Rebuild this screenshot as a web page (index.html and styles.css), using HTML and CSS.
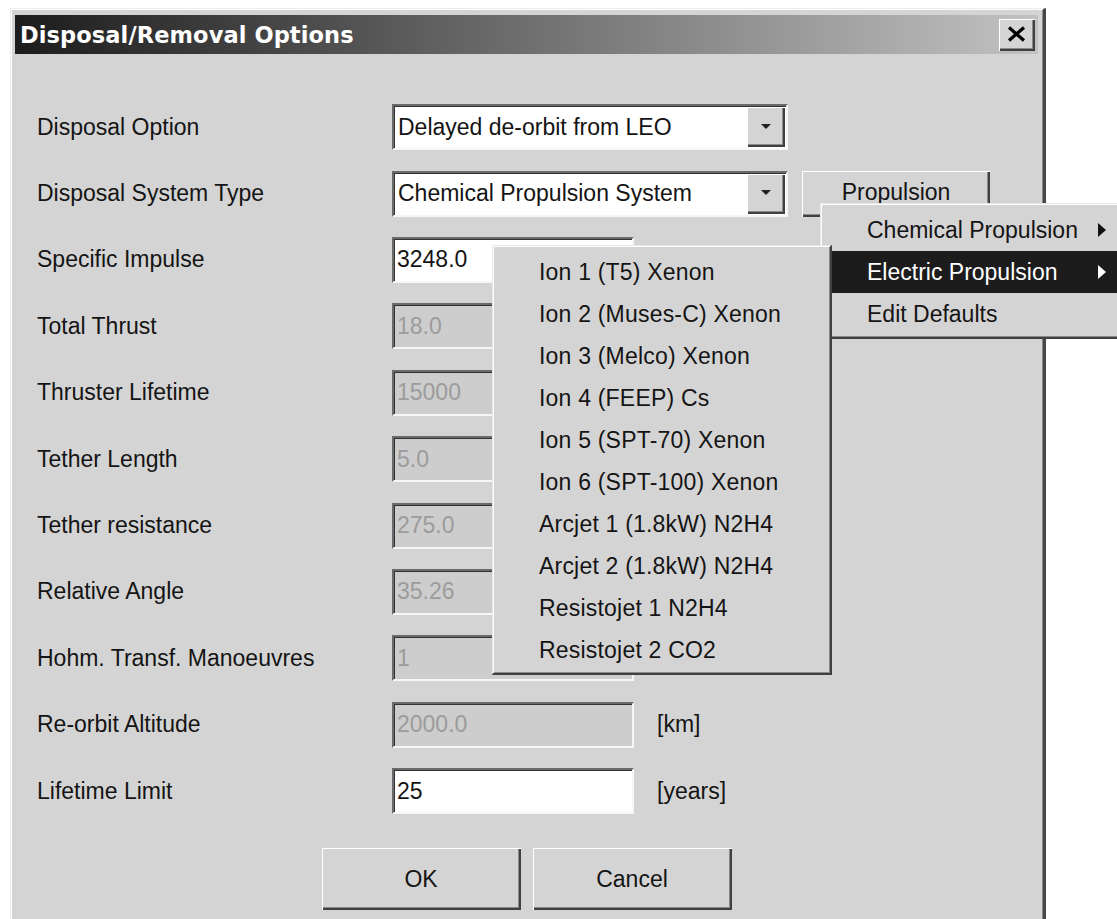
FILE: index.html
```html
<!DOCTYPE html>
<html lang="en">
<head>
<meta charset="utf-8">
<title>Disposal/Removal Options</title>
<link rel="stylesheet" href="styles.css">
</head>
<body>
<div class="screen">
  <div class="window">
    <div class="titlebar">
      <span class="title">Disposal/Removal Options</span>
      <button class="close" type="button" aria-label="Close">
        <svg width="19" height="16" viewBox="0 0 19 16"><path d="M2 1.5 L17 14.5 M17 1.5 L2 14.5" stroke="#000" stroke-width="3.2" fill="none"/></svg>
      </button>
    </div>

    <div class="content">
      <div class="form">
        <div class="row">
          <span class="label">Disposal Option</span>
          <div class="combo">
            <span class="combo-text">Delayed de-orbit from LEO</span>
            <span class="combo-btn"><span class="down"></span></span>
          </div>
        </div>
        <div class="row">
          <span class="label">Disposal System Type</span>
          <div class="combo">
            <span class="combo-text">Chemical Propulsion System</span>
            <span class="combo-btn"><span class="down"></span></span>
          </div>
          <button class="push" type="button">Propulsion</button>
        </div>
        <div class="row">
          <span class="label">Specific Impulse</span>
          <span class="field">3248.0</span>
        </div>
        <div class="row">
          <span class="label">Total Thrust</span>
          <span class="field disabled">18.0</span>
        </div>
        <div class="row">
          <span class="label">Thruster Lifetime</span>
          <span class="field disabled">15000</span>
        </div>
        <div class="row">
          <span class="label">Tether Length</span>
          <span class="field disabled">5.0</span>
        </div>
        <div class="row">
          <span class="label">Tether resistance</span>
          <span class="field disabled">275.0</span>
        </div>
        <div class="row">
          <span class="label">Relative Angle</span>
          <span class="field disabled">35.26</span>
        </div>
        <div class="row">
          <span class="label">Hohm. Transf. Manoeuvres</span>
          <span class="field disabled">1</span>
        </div>
        <div class="row">
          <span class="label">Re-orbit Altitude</span>
          <span class="field disabled">2000.0</span>
          <span class="unit">[km]</span>
        </div>
        <div class="row">
          <span class="label">Lifetime Limit</span>
          <span class="field">25</span>
          <span class="unit">[years]</span>
        </div>
      </div>

      <div class="actions">
        <button class="btn" type="button">OK</button>
        <button class="btn" type="button">Cancel</button>
      </div>
    </div>
  </div>

  <div class="menu menu-main">
    <div class="menu-item">Chemical Propulsion<span class="sub-arrow"></span></div>
    <div class="menu-item active">Electric Propulsion<span class="sub-arrow"></span></div>
    <div class="menu-item">Edit Defaults</div>
  </div>

  <div class="menu menu-electric">
    <div class="menu-item">Ion 1 (T5) Xenon</div>
    <div class="menu-item">Ion 2 (Muses-C) Xenon</div>
    <div class="menu-item">Ion 3 (Melco) Xenon</div>
    <div class="menu-item">Ion 4 (FEEP) Cs</div>
    <div class="menu-item">Ion 5 (SPT-70) Xenon</div>
    <div class="menu-item">Ion 6 (SPT-100) Xenon</div>
    <div class="menu-item">Arcjet 1 (1.8kW) N2H4</div>
    <div class="menu-item">Arcjet 2 (1.8kW) N2H4</div>
    <div class="menu-item">Resistojet 1 N2H4</div>
    <div class="menu-item">Resistojet 2 CO2</div>
  </div>
</div>
</body>
</html>
```

FILE: styles.css
```css
html, body {
  margin: 0;
  height: 100%;
  overflow: hidden;
  background: #fff;
}

.screen {
  position: relative;
  box-sizing: border-box;
  height: 919px;
  padding: 8px 0 0 10px;
  font-family: "Liberation Sans", Arial, sans-serif;
  font-size: 23px;
  color: #141414;
}

/* dialog frame */
.window {
  box-sizing: border-box;
  width: 1036px;
  height: 940px;
  padding: 6px 5px 0 4px;
  background: #d4d4d4;
  border-top: 1px solid #ececec;
  border-left: 1px solid #ececec;
  border-right: 3px solid #464646;
  box-shadow: inset 1px 1px 0 #fff, inset -1px 0 0 #8a8a8a;
}

.titlebar {
  display: flex;
  align-items: center;
  height: 39px;
  padding-left: 5px;
  background: linear-gradient(to right, #1c1c1c, #c2c2c2);
}

.title {
  flex: 1;
  color: #fff;
  font-family: "DejaVu Sans", Verdana, sans-serif;
  font-weight: bold;
  font-size: 22.5px;
  letter-spacing: 0.1px;
}

.close {
  display: flex;
  align-items: center;
  justify-content: center;
  box-sizing: border-box;
  width: 36px;
  height: 32px;
  margin-right: 3px;
  padding: 0 1px 1px 0;
  background: #d4d4d4;
  border: 0;
  box-shadow: inset 1px 1px 0 #fff, inset -2px -2px 0 #404040, inset -3px -3px 0 #8a8a8a;
}

/* form body */
.content {
  padding: 40px 22px 0 22px;
}

.row {
  display: flex;
  align-items: center;
  height: 66.4px;
}

.label {
  flex: none;
  width: 355px;
}

.field,
.combo {
  box-sizing: border-box;
  height: 46px;
  display: flex;
  align-items: center;
  background: #fff;
  border-style: solid;
  border-width: 2px;
  border-color: #6a6a6a #f6f6f6 #f6f6f6 #6a6a6a;
  box-shadow: inset 1px 1px 0 #333;
}

.field {
  flex: none;
  width: 242px;
  padding-left: 3px;
}

.field.disabled {
  background: #cdcdcd;
  color: #9c9c9c;
}

.unit {
  margin-left: 23px;
}

.combo {
  flex: none;
  width: 396px;
  padding: 1px 1px 1px 4px;
}

.combo-text {
  flex: 1;
  white-space: nowrap;
}

.combo-btn {
  display: flex;
  align-items: center;
  justify-content: center;
  box-sizing: border-box;
  width: 38px;
  height: 40px;
  background: #d4d4d4;
  box-shadow: inset 1px 1px 0 #fff, inset -2px -2px 0 #404040, inset -3px -3px 0 #8a8a8a;
}

.down {
  width: 0;
  height: 0;
  border-left: 5px solid transparent;
  border-right: 5px solid transparent;
  border-top: 5px solid #222;
  margin-top: -2px;
}

.push,
.btn {
  box-sizing: border-box;
  padding: 0;
  background: #d4d4d4;
  border: 0;
  font: inherit;
  color: #141414;
  box-shadow: inset 1px 1px 0 #fff, inset -2px -2px 0 #404040, inset -3px -3px 0 #8a8a8a;
}

.push {
  flex: none;
  width: 188px;
  height: 46px;
  margin-left: 14px;
  padding-bottom: 2px;
}

.actions {
  display: flex;
  justify-content: center;
  gap: 12px;
  margin-top: 24px;
}

.btn {
  width: 199px;
  height: 62px;
}

/* popup menus */
.menu {
  position: absolute;
  box-sizing: border-box;
  background: #d4d4d4;
  border-top: 1px solid #e6e6e6;
  border-left: 1px solid #e6e6e6;
  border-right: 2px solid #404040;
  border-bottom: 2px solid #404040;
  box-shadow: inset 1px 1px 0 #fff, inset -1px -1px 0 #8a8a8a;
}

.menu-main {
  left: 820px;
  top: 203px;
  width: 320px;
  height: 136px;
  padding: 5px 2px 0 2px;
  z-index: 1;
}

.menu-electric {
  left: 492px;
  top: 245px;
  width: 340px;
  height: 430px;
  padding: 5px 2px 0 2px;
  z-index: 2;
}

.menu-item {
  position: relative;
  display: flex;
  align-items: center;
  height: 42px;
  padding-left: 44px;
  white-space: nowrap;
}

.menu-electric .menu-item {
  letter-spacing: 0.2px;
}

.menu-item.active {
  background: #1c1c1c;
  color: #fff;
}

.sub-arrow {
  position: absolute;
  left: 275px;
  top: 14px;
  width: 0;
  height: 0;
  border-top: 7px solid transparent;
  border-bottom: 7px solid transparent;
  border-left: 8px solid #111;
}

.menu-item.active .sub-arrow {
  border-left-color: #fff;
}
```
